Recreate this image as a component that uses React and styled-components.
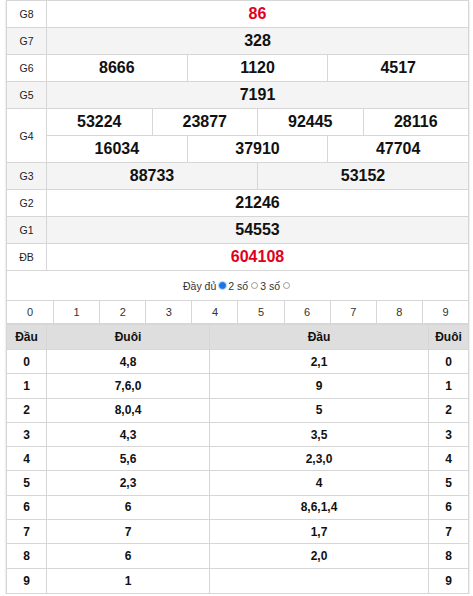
import React from "react";
import styled, { createGlobalStyle } from "styled-components";

const Global = createGlobalStyle`
  html, body { margin: 0; padding: 0; background: #fff; }
  body { font-family: "Liberation Sans", Arial, sans-serif; color: #111; }
`;

const Box = styled.div`
  margin: 0 4px 0 6px;
  border: 1px solid #d6d6d6;
  box-shadow: 0 1px 2px rgba(0, 0, 0, 0.18);
  background: #fff;
`;

const PrizeRow = styled.div`
  display: flex;
  border-bottom: 1px solid #d6d6d6;
  background: ${(p) => (p.$alt ? "#f4f4f4" : "#fff")};
`;

const Label = styled.div`
  width: 39px;
  flex: none;
  border-right: 1px solid #d6d6d6;
  display: flex;
  align-items: center;
  justify-content: center;
  font-size: 10.5px;
  color: #222;
`;

const Values = styled.div`
  flex: 1;
  display: flex;
  flex-direction: column;
`;

const SubRow = styled.div`
  display: flex;
  height: 26px;
  & + & { border-top: 1px solid #d6d6d6; }
`;

const Cell = styled.div`
  flex: 1;
  display: flex;
  align-items: center;
  justify-content: center;
  font-size: 16px;
  font-weight: bold;
  color: ${(p) => (p.$red ? "#e0001b" : "#111")};
  & + & { border-left: 1px solid #d6d6d6; }
`;

const OptionRow = styled.div`
  height: 29px;
  border-bottom: 1px solid #d6d6d6;
  display: flex;
  align-items: center;
  justify-content: center;
  font-size: 10.5px;
  color: #333;
`;

const Radio = styled.span`
  display: inline-block;
  width: 7px;
  height: 7px;
  border-radius: 50%;
  margin: 0 2px 0 3px;
  box-sizing: border-box;
  border: 1px solid ${(p) => (p.$on ? "#1a73e8" : "#9a9a9a")};
  background: ${(p) => (p.$on ? "#1a73e8" : "#fff")};
  box-shadow: ${(p) => (p.$on ? "0 0 0 1px #b9d4f6" : "none")};
`;

const DigitRow = styled.div`
  display: grid;
  grid-template-columns: repeat(10, 1fr);
  height: 22px;
  border-bottom: 2px solid #d6d6d6;
`;

const Digit = styled.div`
  display: flex;
  align-items: center;
  justify-content: center;
  font-size: 11px;
  color: #333;
  & + & { border-left: 1px solid #d6d6d6; }
`;

const StatGrid = styled.div`
  display: grid;
  grid-template-columns: 40px 163px 219px 1fr;
`;

const StatCell = styled.div`
  display: flex;
  align-items: center;
  justify-content: center;
  font-size: 12px;
  font-weight: bold;
  color: #111;
  height: ${(p) => (p.$head ? "25px" : "24.3px")};
  box-sizing: border-box;
  border-bottom: ${(p) => (p.$last ? "none" : "1px solid #d6d6d6")};
  border-right: ${(p) => (p.$end ? "none" : "1px solid #d6d6d6")};
  background: ${(p) => (p.$head ? "#dedede" : "#fff")};
`;

const prizes = [
  { label: "G8", rows: [["86"]], red: true },
  { label: "G7", rows: [["328"]], alt: true },
  { label: "G6", rows: [["8666", "1120", "4517"]] },
  { label: "G5", rows: [["7191"]], alt: true },
  { label: "G4", rows: [["53224", "23877", "92445", "28116"], ["16034", "37910", "47704"]] },
  { label: "G3", rows: [["88733", "53152"]], alt: true },
  { label: "G2", rows: [["21246"]] },
  { label: "G1", rows: [["54553"]], alt: true },
  { label: "ĐB", rows: [["604108"]], red: true },
];

const stats = [
  ["0", "4,8", "2,1", "0"],
  ["1", "7,6,0", "9", "1"],
  ["2", "8,0,4", "5", "2"],
  ["3", "4,3", "3,5", "3"],
  ["4", "5,6", "2,3,0", "4"],
  ["5", "2,3", "4", "5"],
  ["6", "6", "8,6,1,4", "6"],
  ["7", "7", "1,7", "7"],
  ["8", "6", "2,0", "8"],
  ["9", "1", "", "9"],
];

export default function App() {
  return (
    <>
      <Global />
      <Box>
        {prizes.map((p) => (
          <PrizeRow key={p.label} $alt={p.alt}>
            <Label>{p.label}</Label>
            <Values>
              {p.rows.map((r, i) => (
                <SubRow key={i}>
                  {r.map((v) => (
                    <Cell key={v} $red={p.red}>{v}</Cell>
                  ))}
                </SubRow>
              ))}
            </Values>
          </PrizeRow>
        ))}
        <OptionRow>
          Đầy đủ<Radio $on />2 số<Radio />3 số<Radio />
        </OptionRow>
        <DigitRow>
          {Array.from({ length: 10 }, (_, i) => (
            <Digit key={i}>{i}</Digit>
          ))}
        </DigitRow>
        <StatGrid>
          {["Đầu", "Đuôi", "Đầu", "Đuôi"].map((h, i) => (
            <StatCell key={"h" + i} $head $end={i === 3}>{h}</StatCell>
          ))}
          {stats.map((r, ri) =>
            r.map((v, ci) => (
              <StatCell key={ri + "-" + ci} $end={ci === 3} $last={ri === 9}>{v}</StatCell>
            ))
          )}
        </StatGrid>
      </Box>
    </>
  );
}
